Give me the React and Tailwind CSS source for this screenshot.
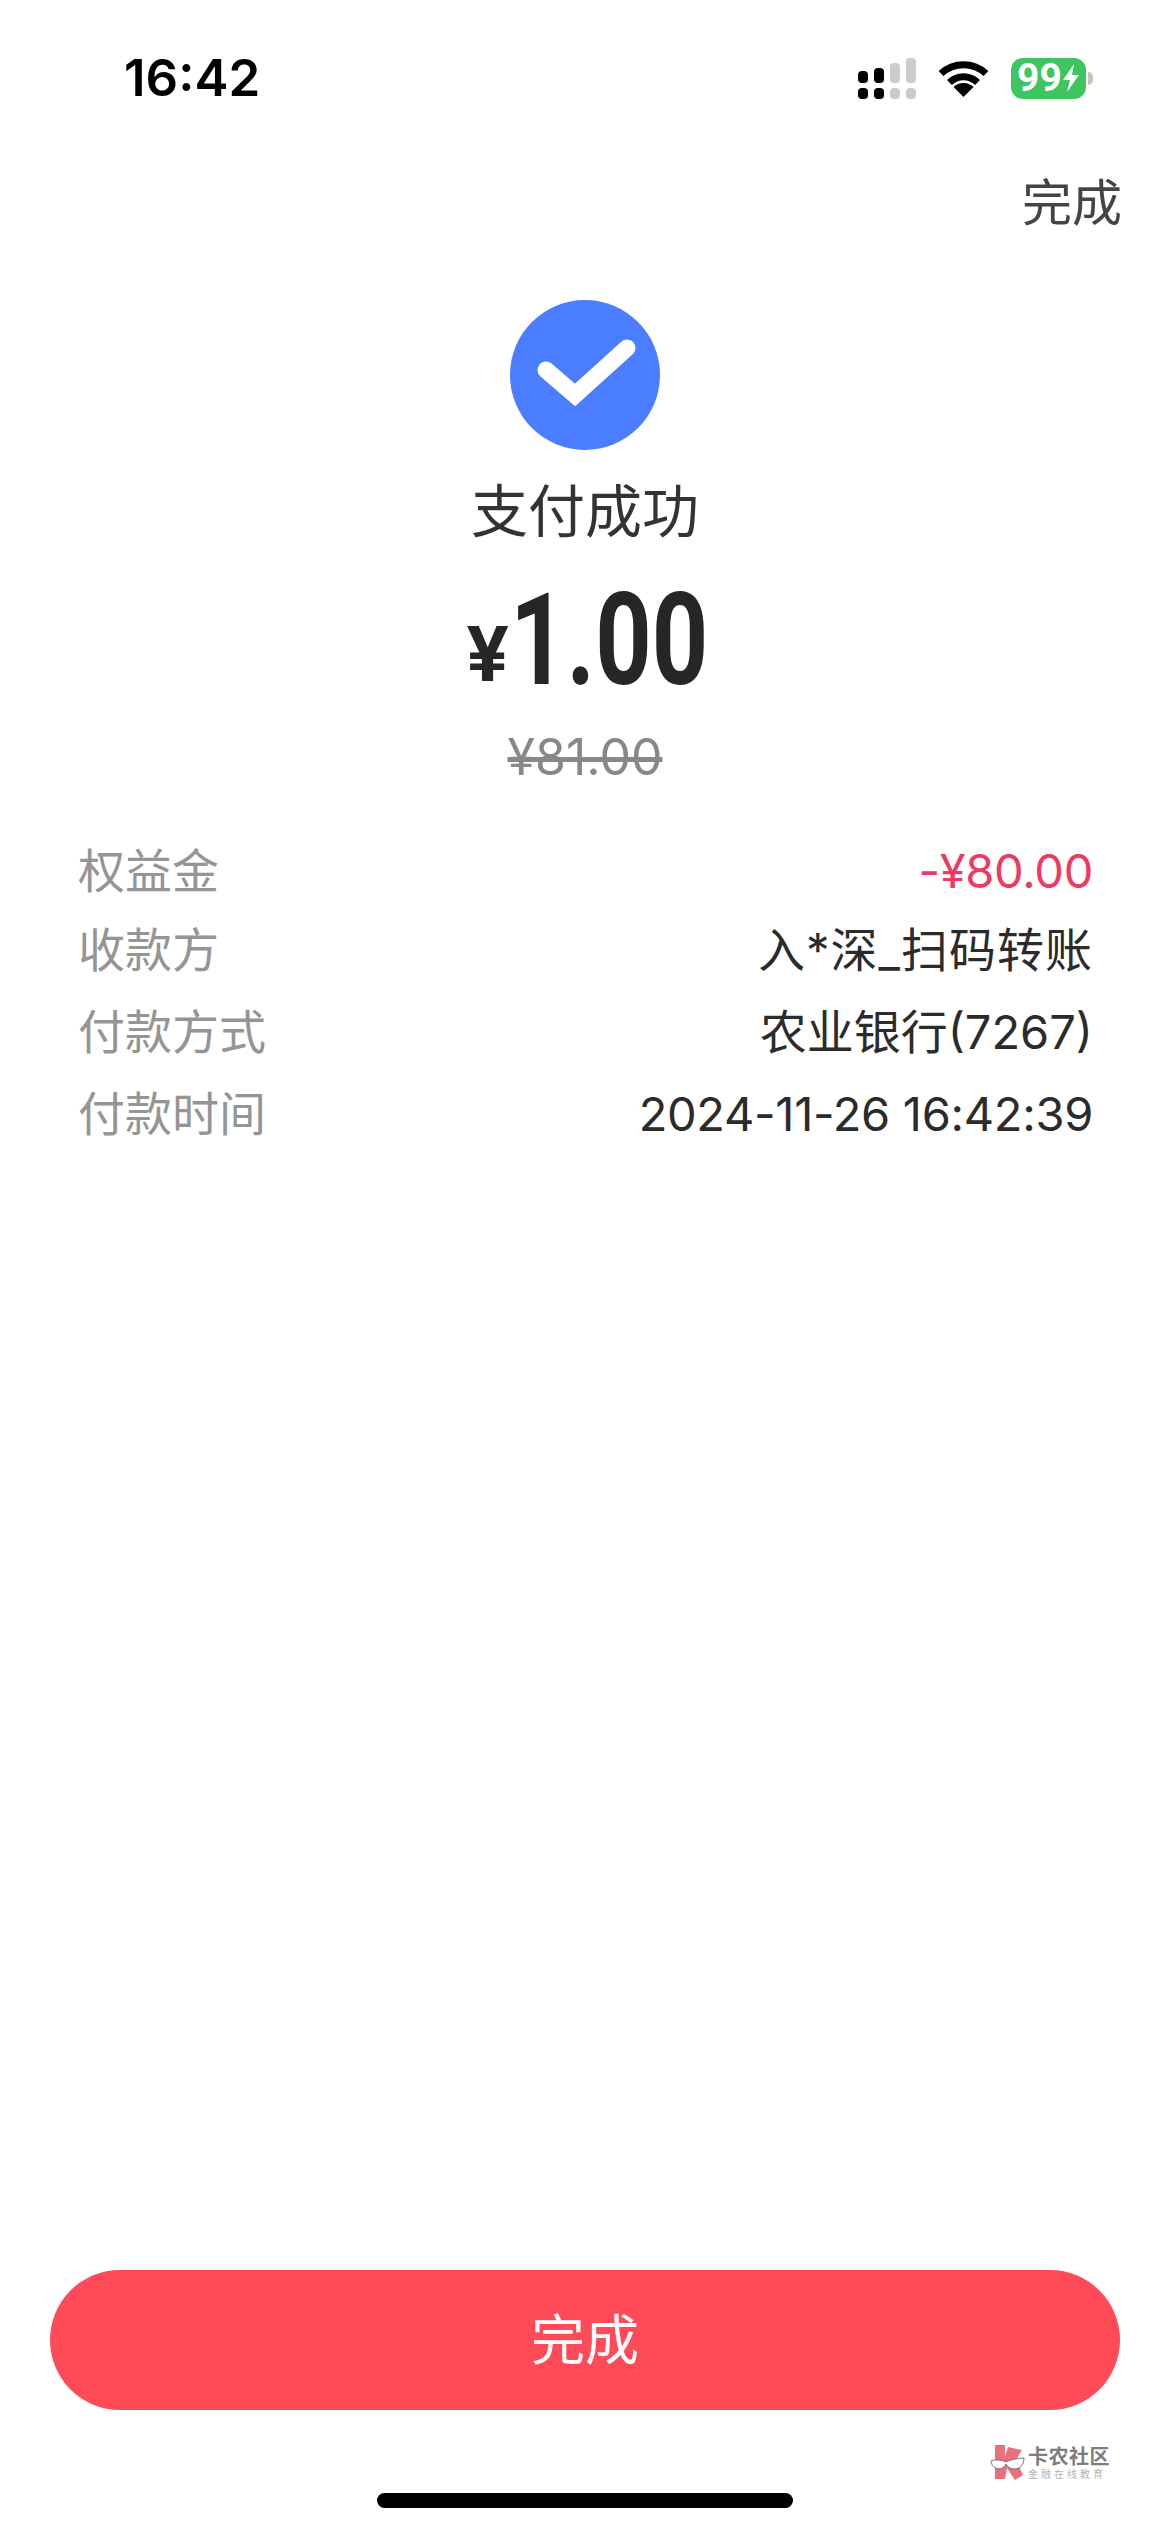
import React from 'react';

const cjk = "font-['Inter','Noto_Sans_CJK_SC',sans-serif]";

const rows = [
    { label: '权益金', value: '-¥80.00', valueClass: 'text-[#ec3a62] tracking-[-0.3px]', rowClass: 'h-[78px]' },
    { label: '收款方', value: '入*深_扫码转账', valueClass: 'text-[#2b2b2b] tracking-[1px]', rowClass: 'h-[81px]' },
    { label: '付款方式', value: '农业银行(7267)', valueClass: 'text-[#2b2b2b]', rowClass: 'h-[82px]' },
    { label: '付款时间', value: '2024-11-26 16:42:39', valueClass: 'text-[#2b2b2b] tracking-[-0.3px]', rowClass: 'h-[82px]' },
];

const SignalIcon = () => (
    <svg width="58" height="41" viewBox="0 0 58 41">
        <rect x="0" y="13" width="10" height="12" rx="4" fill="#000" />
        <rect x="16" y="10" width="10" height="15" rx="4" fill="#000" />
        <rect x="32" y="5" width="10" height="20" rx="4" fill="#cccccc" />
        <rect x="48" y="0" width="10" height="25" rx="4" fill="#cccccc" />
        <rect x="0" y="30" width="10" height="11" rx="4" fill="#000" />
        <rect x="16" y="30" width="10" height="11" rx="4" fill="#000" />
        <rect x="32" y="30" width="10" height="11" rx="4" fill="#cccccc" />
        <rect x="48" y="30" width="10" height="11" rx="4" fill="#cccccc" />
    </svg>
);

const WifiIcon = () => (
    <svg width="51" height="37" viewBox="0 0 51 37">
        <path d="M3 13.5A33 33 0 0 1 48 13.5" fill="none" stroke="#000" strokeWidth="7" />
        <path d="M11.5 22.5A20 20 0 0 1 39.5 22.5" fill="none" stroke="#000" strokeWidth="7" />
        <path d="M25.5 37L15.5 27A14.5 14.5 0 0 1 35.5 27Z" fill="#000" />
    </svg>
);

const BatteryIcon = () => (
    <div className="flex items-center gap-[2px]">
        <div className="flex h-[41px] w-[75px] items-center justify-center rounded-[12px] bg-[#3ec55f]">
            <span className="font-['Roboto',sans-serif] text-[39px] leading-none font-bold text-white">99</span>
            <svg width="18" height="28" viewBox="0 0 18 28">
                <path d="M12 0L1 16H8L5 28L17 11H10Z" fill="#fff" />
            </svg>
        </div>
        <div className="h-[13px] w-[5px] rounded-r-full bg-[#c4c4c4]" />
    </div>
);

const Watermark = () => (
    <div className="absolute top-[2445px] left-[990px] flex items-center gap-[3px]">
        <svg width="35" height="35" viewBox="0 0 35 35">
            <path d="M5 0H15V11L18 2L32 5L26 15L33 30L25 35L17 23L15 34H5Z" fill="#e9707f" />
            <path d="M1 16C6 14 12 15 16 17C20 15 28 13 34 13C34 20 30 24 24 24C20 24 17 21 16 19C14 23 10 25 6 23C3 22 1 19 1 16Z" fill="#fff" stroke="#777" strokeWidth="1" />
        </svg>
        <div className="flex flex-col">
            <span className={`${cjk} text-[20px] leading-[22px] font-bold tracking-[0.5px] text-[#7d7d7d]`}>卡农社区</span>
            <span className={`${cjk} text-[10px] leading-[12px] tracking-[3px] text-[#b5b5b5]`}>金融在线教育</span>
        </div>
    </div>
);

const App = () => {
    return (
        <div className={`${cjk} relative flex h-[2532px] w-[1170px] flex-col overflow-hidden bg-white`}>
            <div className="flex h-[156px] items-center justify-between pr-[77px] pl-[124px]">
                <span className="text-[51px] font-semibold text-black">16:42</span>
                <div className="flex items-center gap-[22px]">
                    <SignalIcon />
                    <WifiIcon />
                    <BatteryIcon />
                </div>
            </div>

            <div className="flex h-[94px] items-center justify-end pr-[48px]">
                <span className="text-[50px] leading-none text-[#444444]">完成</span>
            </div>

            <div className="mt-[50px] flex flex-col items-center">
                <div className="flex h-[150px] w-[150px] items-center justify-center rounded-full bg-[#4a7dff]">
                    <svg width="150" height="150" viewBox="0 0 150 150">
                        <path d="M36 70L65 95L117 48" fill="none" stroke="#fff" strokeWidth="17" strokeLinecap="round" strokeLinejoin="miter" />
                    </svg>
                </div>
                <div className="mt-[27px] h-[70px] text-[57px] leading-[70px] text-[#333333]">支付成功</div>
                <div className="mt-[29px] flex h-[120px] w-[238px] items-end font-['Roboto',sans-serif] font-bold text-[#262626]">
                    <span className="mr-[1px] mb-[5px] font-['Inter',sans-serif] text-[76px] leading-none">¥</span>
                    <span className="mb-[-4px] origin-left scale-x-[0.77] text-[128px] leading-[120px]">1.00</span>
                </div>
                <div className="mt-[31px] h-[60px] text-[50px] leading-[60px] text-[#888888] line-through">¥81.00</div>
            </div>

            <div className="mt-[45px] flex flex-col pr-[77px] pl-[78px]">
                {rows.map((row) => (
                    <div key={row.label} className={`flex items-center justify-between text-[47px] ${row.rowClass}`}>
                        <span className="text-[#959595]">{row.label}</span>
                        <span className={row.valueClass}>{row.value}</span>
                    </div>
                ))}
            </div>

            <div className="mt-auto flex flex-col items-center">
                <button className="flex h-[140px] w-[1070px] items-center justify-center rounded-full bg-[#ff4a57] text-[54px] text-white">
                    完成
                </button>
                <div className="mt-[83px] mb-[24px] h-[15px] w-[416px] rounded-full bg-black" />
            </div>

            <Watermark />
        </div>
    );
};

export default App;
